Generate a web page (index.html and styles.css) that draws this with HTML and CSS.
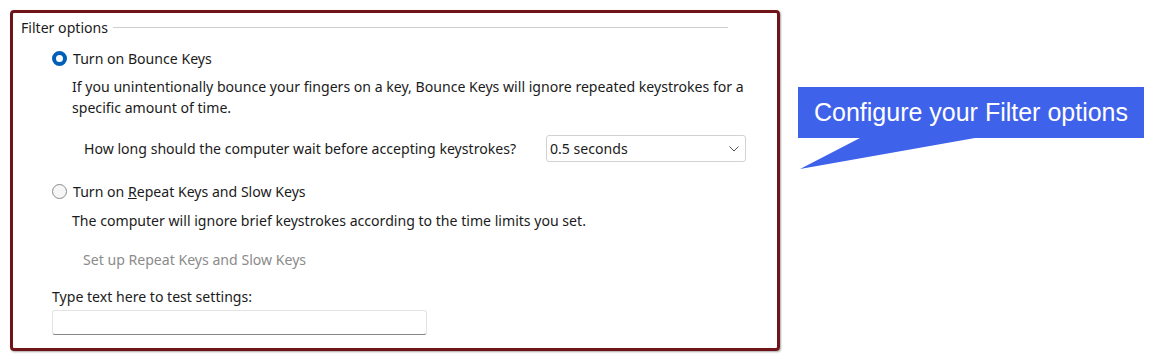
FILE: index.html
```html
<!DOCTYPE html>
<html>
<head>
<meta charset="utf-8">
<link rel="stylesheet" href="styles.css">
</head>
<body>
<div class="frame">
  <div class="legend"><span>Filter options</span><span class="rule"></span></div>
  <div class="radio-row first"><span class="radio checked"></span><span>Turn on Bounce Keys</span></div>
  <p class="desc first-desc">If you unintentionally bounce your fingers on a key, Bounce Keys will ignore repeated keystrokes for a specific amount of time.</p>
  <div class="select-row">
    <span class="select-label">How long should the computer wait before accepting keystrokes?</span>
    <div class="select"><span>0.5 seconds</span>
      <svg class="chev" width="10" height="6" viewBox="0 0 10 6"><path d="M0.5 0.5 L5 5 L9.5 0.5" fill="none" stroke="#555" stroke-width="1"/></svg>
    </div>
  </div>
  <div class="radio-row second"><span class="radio"></span><span>Turn on <u>R</u>epeat Keys and Slow Keys</span></div>
  <p class="desc second-desc">The computer will ignore brief keystrokes according to the time limits you set.</p>
  <div class="link">Set up Repeat Keys and Slow Keys</div>
  <div class="test-label">Type text here to test settings:</div>
  <div class="test-input"></div>
</div>
<div class="callout">
  <div class="callout-box">Configure your Filter options</div>
  <svg class="tail" width="180" height="32" viewBox="0 0 180 32"><polygon points="62,0 177,0 2,31" fill="#3f62ea"/></svg>
</div>
</body>
</html>
```
FILE: styles.css
```css
html, body { margin: 0; padding: 0; background: #fff; }
body {
  font-family: "Noto Sans", "Open Sans", sans-serif;
  font-size: 14.1px;
  color: #1b1b1b;
  position: relative;
  width: 1153px;
  height: 362px;
  overflow: hidden;
}
.frame {
  margin: 10px 0 0 10px;
  width: 764px;
  height: 335px;
  border: 3px solid #6f1418;
  border-radius: 4px;
  box-shadow: 1px 1px 2px rgba(0,0,0,0.35);
  display: flex;
  flex-direction: column;
}
.legend {
  display: flex;
  align-items: center;
  gap: 5px;
  height: 20px;
  margin-top: 4px;
  padding: 0 49px 0 8px;
}
.rule { flex: 1; height: 1px; background: #cfcfcf; }
.radio-row {
  display: flex;
  align-items: center;
  gap: 6px;
  height: 20px;
  padding-left: 39px;
}
.radio-row.first { margin-top: 11px; }
.radio-row.second { margin-top: 19px; }
.radio {
  width: 15px; height: 15px;
  box-sizing: border-box;
  border-radius: 50%;
  border: 1px solid #8a8a8a;
  background: #f6f6f6;
  flex: none;
}
.radio.checked {
  border: 4.5px solid #005fb8;
  background: #fff;
}
.desc {
  margin: 0;
  padding-left: 59px;
  line-height: 21px;
  width: 684px;
}
.first-desc { margin-top: 8px; }
.second-desc { margin-top: 9px; }
.select-row {
  display: flex;
  align-items: center;
  margin-top: 17px;
  padding-left: 71px;
  height: 27px;
}
.select-label { width: 462px; }
.select {
  width: 200px;
  height: 27px;
  box-sizing: border-box;
  border: 1px solid #d2d2d2;
  border-radius: 3px;
  display: flex;
  align-items: center;
  justify-content: space-between;
  padding: 0 6px 0 3px;
}
.link {
  margin-top: 18px;
  padding-left: 70px;
  color: #8b8b8b;
  line-height: 21px;
}
.test-label {
  margin-top: 16px;
  padding-left: 39px;
  line-height: 21px;
}
.test-input {
  margin: 3px 0 0 39px;
  width: 375px;
  height: 25px;
  box-sizing: border-box;
  border: 1px solid #e3e3e3;
  border-bottom: 1px solid #878787;
  border-radius: 3px;
}
.callout {
  position: absolute;
  left: 798px;
  top: 87px;
  display: flex;
  flex-direction: column;
}
.callout-box {
  width: 346px;
  height: 51px;
  background: #3f62ea;
  color: #fff;
  font-family: "Liberation Sans", Arial, sans-serif;
  font-size: 25px;
  display: flex;
  align-items: center;
  justify-content: center;
}
.tail { display: block; }
```
